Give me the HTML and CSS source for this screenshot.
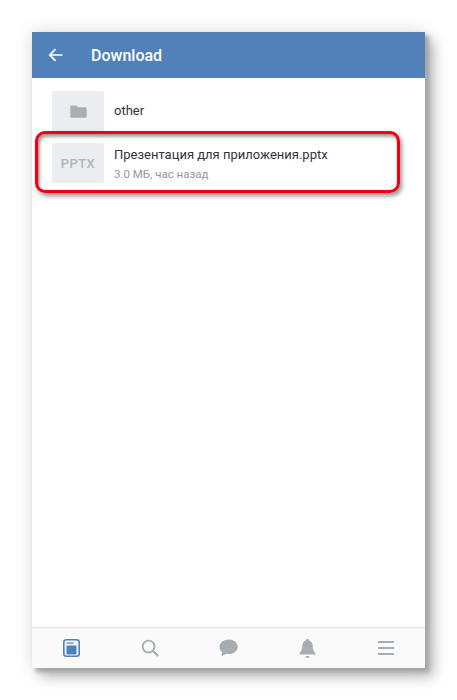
FILE: index.html
```html
<!DOCTYPE html>
<html lang="ru">
<head>
<meta charset="utf-8">
<title>Download</title>
<link rel="stylesheet" href="styles.css">
</head>
<body>
<div class="phone">
  <header class="bar">
    <svg class="back" width="16" height="14" viewBox="0 0 16 14"><path d="M14.500 7H2M7.500 1.200 1.800 7l5.700 5.800" fill="none" stroke="#fff" stroke-width="1.700"/></svg>
    <span class="bar-title">Download</span>
  </header>
  <main class="list">
    <div class="row row-folder">
      <div class="thumb thumb-folder">
        <svg width="17" height="13" viewBox="0 0 18 14"><path d="M1.500 .5h5l2 2h8a1.300 1.300 0 0 1 1.300 1.300v8.700a1.300 1.300 0 0 1-1.300 1.300h-15A1.300 1.300 0 0 1 .2 12.500V1.800A1.300 1.300 0 0 1 1.500 .5z" fill="#aaaeb3"/></svg>
      </div>
      <div class="name">other</div>
    </div>
    <div class="row row-file">
      <div class="thumb thumb-file">PPTX</div>
      <div class="info">
        <div class="name">Презентация для приложения.pptx</div>
        <div class="meta">3.0 МБ, час назад</div>
      </div>
      <div class="mark"></div>
    </div>
  </main>
  <nav class="tabs">
    <svg width="17" height="18" viewBox="0 0 17 18"><rect x=".8" y=".8" width="15.400" height="16.400" rx="2.500" fill="#f4f7fa" stroke="#5181b8" stroke-width="1.600"/><rect x="3.500" y="6.500" width="10" height="9" fill="#5181b8"/><rect x="3.500" y="3.500" width="7" height="1.200" fill="#5181b8"/></svg>
    <svg width="18" height="18" viewBox="0 0 19 19"><circle cx="8" cy="8" r="6.300" fill="none" stroke="#a8adb3" stroke-width="2"/><path d="M12.500 12.500 18 18" stroke="#a8adb3" stroke-width="2.200"/></svg>
    <svg width="19" height="18" viewBox="0 0 19 18"><path d="M9.800 .5c5 0 9 3.200 9 7.300s-4 7.300-9 7.300c-1 0-1.900-.1-2.800-.4L2.500 17.400l.6-4.300C1.200 11.800.5 9.900.5 7.800.5 3.700 4.800.5 9.800.5z" fill="#a8adb3"/></svg>
    <svg width="17" height="19" viewBox="0 0 17 19"><path d="M8.500 0c1 0 1.500.7 1.500 1.500 2.600.7 3.700 2.900 3.700 5.500 0 3 .6 5 2.800 7.500v1H.5v-1C2.700 12 3.300 10 3.300 7c0-2.600 1.100-4.800 3.700-5.500C7 .7 7.500 0 8.500 0z" fill="#a8adb3"/><rect x="6.500" y="17" width="4" height="1.700" rx=".8" fill="#a8adb3"/></svg>
    <svg width="16" height="14" viewBox="0 0 16 14"><path d="M0 1h16M0 7h16M0 13h16" stroke="#a8adb3" stroke-width="2"/></svg>
  </nav>
</div>
</body>
</html>
```
FILE: styles.css
```css
html, body { margin: 0; padding: 0; background: #fff; }
body {
  width: 457px;
  height: 700px;
  padding: 32px 32px 0;
  box-sizing: border-box;
  overflow: hidden;
  font-family: Roboto, "Liberation Sans", sans-serif;
}
.phone {
  width: 393px;
  height: 636px;
  display: flex;
  flex-direction: column;
  background: #fff;
  box-shadow: 4px 4px 4px #a6a6a6, 9px 9px 12px rgba(150,150,150,.6), 0 0 16px rgba(170,170,170,.4);
}
.bar {
  height: 46px;
  flex: none;
  display: flex;
  align-items: center;
  background: #5181b8;
  padding-left: 16px;
  box-sizing: border-box;
}
.back { flex: none; }
.bar-title {
  margin-left: 27px;
  color: #fff;
  font-size: 16px;
  font-weight: 500;
}
.list {
  flex: 1;
  display: flex;
  flex-direction: column;
  padding: 13px 20px 0;
  gap: 12px;
}
.row {
  display: flex;
  align-items: center;
  gap: 10px;
  position: relative;
}
.thumb {
  width: 52px;
  height: 40px;
  flex: none;
  background: #ebedf0;
  border-radius: 2px;
  display: flex;
  align-items: center;
  justify-content: center;
}
.thumb-file {
  color: #b2b5b9;
  font-size: 13px;
  font-weight: 500;
  letter-spacing: .4px;
}
.name {
  color: #333;
  font-size: 13px;
  line-height: 16px;
}
.info {
  display: flex;
  flex-direction: column;
  gap: 4px;
  margin-top: 2px;
}
.meta {
  color: #939699;
  font-size: 11.500px;
  line-height: 15px;
}
.mark {
  position: absolute;
  left: -17px;
  top: -12px;
  width: 365px;
  height: 62px;
  box-sizing: border-box;
  border: 3px solid #f00010;
  border-radius: 10px;
  box-shadow: 2px 3px 4px rgba(80,80,80,.6), inset 2px 3px 3px rgba(80,80,80,.5), inset 0 0 2px rgba(80,80,80,.4);
}
.tabs {
  height: 41px;
  flex: none;
  box-sizing: border-box;
  display: grid;
  grid-template-columns: repeat(5, 1fr);
  justify-items: center;
  align-items: center;
  background: #fafafa;
  border-top: 1px solid #e3e4e6;
}
```
